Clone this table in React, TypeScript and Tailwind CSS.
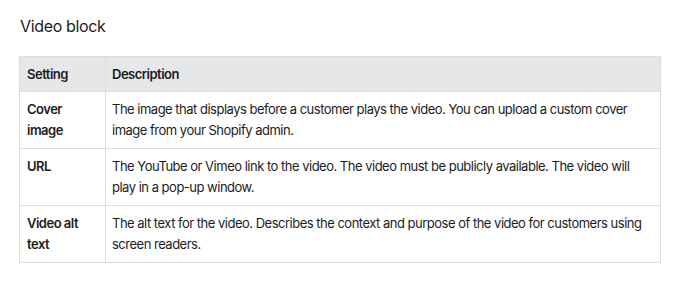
import React from "react";

const rows = [
  {
    setting: "Cover image",
    description:
      "The image that displays before a customer plays the video. You can upload a custom cover image from your Shopify admin.",
  },
  {
    setting: "URL",
    description:
      "The YouTube or Vimeo link to the video. The video must be publicly available. The video will play in a pop-up window.",
  },
  {
    setting: "Video alt text",
    description:
      "The alt text for the video. Describes the context and purpose of the video for customers using screen readers.",
  },
];

const App = () => {
  return (
    <div className="w-[690px] h-[288px] bg-white text-[#1c1c1e] font-['Inter',sans-serif] px-[19px] pt-[16px]">
      <h3 className="text-[16px] leading-[20px] font-normal tracking-[-0.35px] pl-px">Video block</h3>
      <table className="mt-[20px] w-[642px] border-collapse text-[13px] leading-[21px] tracking-[-0.5px]">
        <thead>
          <tr className="bg-[#e6e7e9]">
            <th className="w-[86px] border border-[#dcdde0] px-[7px] py-[7px] leading-[20px] text-left font-semibold">
              Setting
            </th>
            <th className="border border-[#dcdde0] px-[6px] py-[7px] leading-[20px] text-left font-semibold">
              Description
            </th>
          </tr>
        </thead>
        <tbody>
          {rows.map((row) => (
            <tr key={row.setting}>
              <td className="border border-[#dcdde0] px-[7px] py-[7px] align-top font-semibold">
                {row.setting}
              </td>
              <td className="border border-[#dcdde0] px-[6px] py-[7px] align-top">
                {row.description}
              </td>
            </tr>
          ))}
        </tbody>
      </table>
    </div>
  );
};

export default App;
